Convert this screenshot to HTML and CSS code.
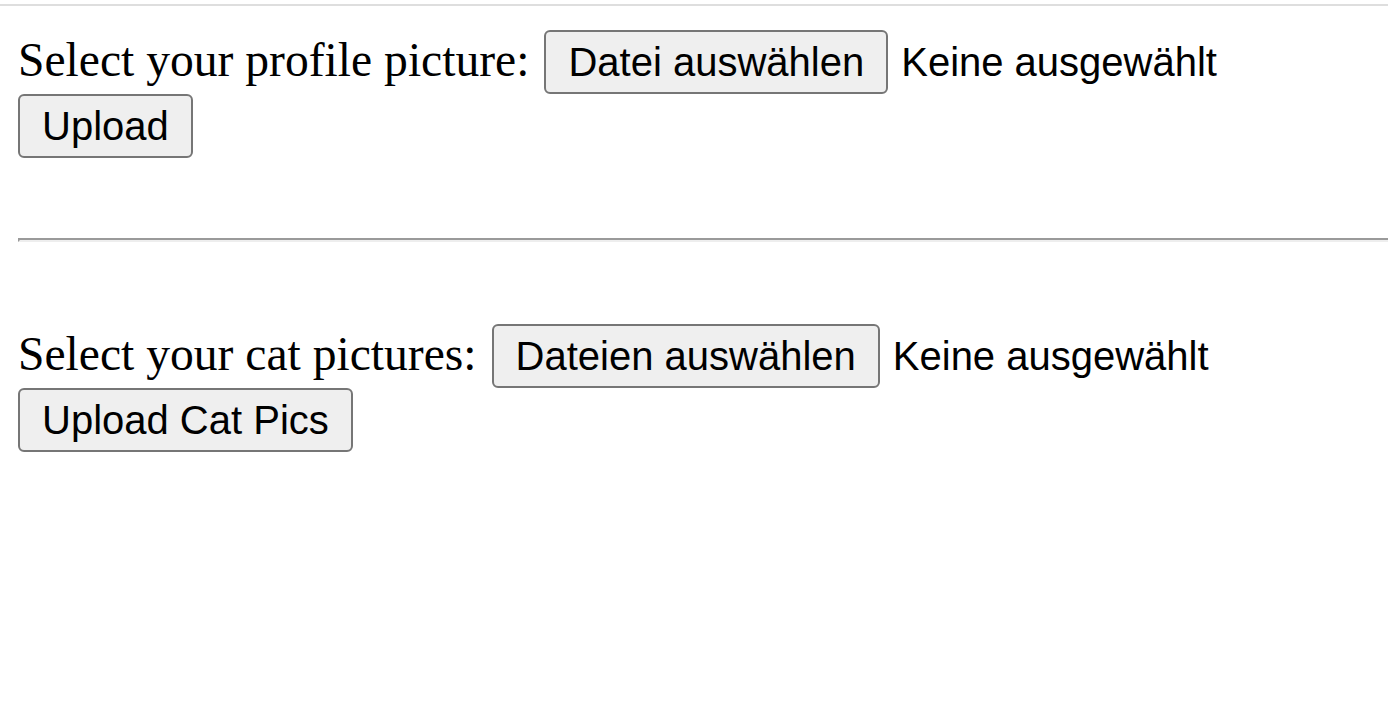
FILE: index.html
```html
<!DOCTYPE html>
<html lang="de">
<head>
<meta charset="utf-8">
<title>Upload</title>
<link rel="stylesheet" href="styles.css">
</head>
<body>
<div class="top-rule"></div>
<main class="page">
  <form class="upload-form first">
    <div class="row">
      <span class="label">Select your profile picture:</span>
      <span class="btn file-btn">Datei auswählen</span>
      <span class="status">Keine ausgewählt</span>
    </div>
    <div class="row">
      <button type="button" class="btn">Upload</button>
    </div>
  </form>
  <div class="rule"></div>
  <form class="upload-form second">
    <div class="row">
      <span class="label">Select your cat pictures:</span>
      <span class="btn file-btn">Dateien auswählen</span>
      <span class="status">Keine ausgewählt</span>
    </div>
    <div class="row">
      <button type="button" class="btn">Upload Cat Pics</button>
    </div>
  </form>
</main>
</body>
</html>
```

FILE: styles.css
```css
html, body {
  margin: 0;
  padding: 0;
  background: #ffffff;
}

.top-rule {
  margin-top: 4px;
  height: 2px;
  background: #dedede;
}

.page {
  padding-left: 18px;
}

.upload-form.first {
  margin-top: 24px;
}

.upload-form.second {
  margin-top: 82px;
}

.row {
  display: flex;
  align-items: baseline;
  height: 64px;
}

.label {
  font-family: "Liberation Serif", "Times New Roman", serif;
  font-size: 47.6px;
  color: #000;
  margin-right: 15px;
  white-space: nowrap;
}

.btn {
  box-sizing: border-box;
  height: 64px;
  display: inline-flex;
  align-items: center;
  padding: 0 22px;
  margin: 0;
  border: 2px solid #767676;
  border-radius: 6px;
  background: #efefef;
  font-family: "Liberation Sans", Arial, sans-serif;
  font-size: 40px;
  color: #000;
  white-space: nowrap;
}

.status {
  font-family: "Liberation Sans", Arial, sans-serif;
  font-size: 40px;
  color: #000;
  margin-left: 13px;
  white-space: nowrap;
}

.rule {
  margin-top: 80px;
  height: 0;
  border-top: 2px solid #9a9a9a;
  border-bottom: 2px solid #eeeeee;
  border-left: 2px solid #9a9a9a;
}
```
